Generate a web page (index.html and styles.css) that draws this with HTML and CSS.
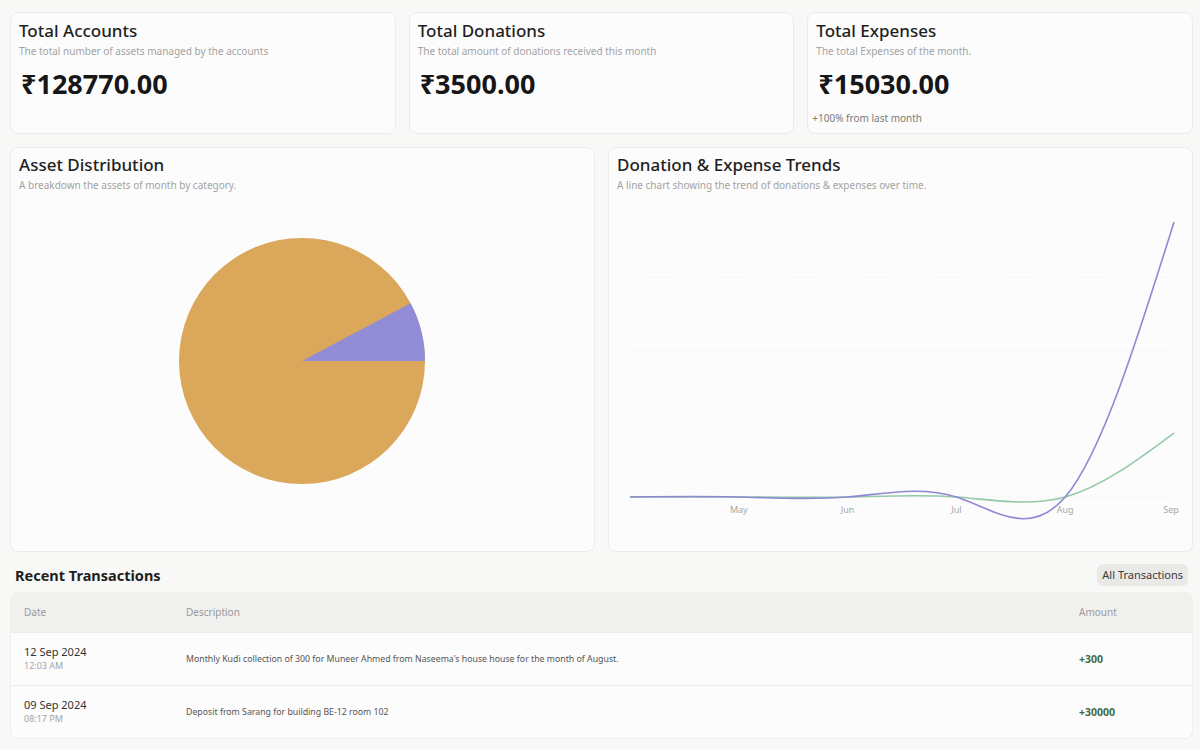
FILE: index.html
```html
<!DOCTYPE html>
<html lang="en">
<head>
<meta charset="utf-8">
<title>Dashboard</title>
<link rel="stylesheet" href="styles.css">
</head>
<body>
<main class="page">
  <section class="stats">
    <div class="card stat">
      <h2 class="card-title">Total Accounts</h2>
      <p class="card-sub">The total number of assets managed by the accounts</p>
      <div class="stat-value">₹128770.00</div>
    </div>
    <div class="card stat">
      <h2 class="card-title">Total Donations</h2>
      <p class="card-sub">The total amount of donations received this month</p>
      <div class="stat-value">₹3500.00</div>
    </div>
    <div class="card stat">
      <h2 class="card-title">Total Expenses</h2>
      <p class="card-sub">The total Expenses of the month.</p>
      <div class="stat-value">₹15030.00</div>
      <div class="stat-foot">+100% from last month</div>
    </div>
  </section>

  <section class="charts">
    <div class="card chart-card">
      <h2 class="card-title">Asset Distribution</h2>
      <p class="card-sub">A breakdown the assets of month by category.</p>
      <div class="chart">
        <svg class="chart-svg" viewBox="11 196 583 347" width="583" height="347">
          <circle cx="302" cy="361" r="123" fill="#dba75b"/>
          <path d="M302 361 L425 361 A123 123 0 0 0 410.6 303.3 Z" fill="#928bd6"/>
        </svg>
      </div>
    </div>
    <div class="card chart-card">
      <h2 class="card-title">Donation &amp; Expense Trends</h2>
      <p class="card-sub">A line chart showing the trend of donations &amp; expenses over time.</p>
      <div class="chart">
        <svg class="chart-svg" viewBox="609 196 583 347" width="583" height="347">
          <g class="grid">
            <line x1="630" y1="277" x2="1174" y2="277"/>
            <line x1="630" y1="351" x2="1174" y2="351"/>
            <line x1="630" y1="424" x2="1174" y2="424"/>
            <line x1="630" y1="497" x2="1174" y2="497"/>
          </g>
          <g class="axis">
            <text x="738.8" y="513">May</text>
            <text x="847.6" y="513">Jun</text>
            <text x="956.4" y="513">Jul</text>
            <text x="1065.2" y="513">Aug</text>
            <text x="1171" y="513">Sep</text>
          </g>
          <path class="line-green" d="M630 497 C666.27 496.90 702.53 496.80 738.8 497 C775.07 497.20 811.33 497.71 847.6 497 C883.87 496.29 920.13 494.35 956.4 497 C992.67 499.65 1028.93 506.90 1065.2 497 C1101.47 487.10 1137.73 460.05 1174 433"/>
          <path class="line-purple" d="M630 497 C666.27 496.56 702.53 496.12 738.8 497 C775.07 497.88 811.33 500.07 847.6 497 C883.87 493.93 920.13 485.60 956.4 497 C992.67 508.40 1028.93 539.54 1065.2 497 C1101.47 454.46 1137.73 338.23 1174 222"/>
        </svg>
      </div>
    </div>
  </section>

  <section class="tx">
    <div class="tx-head">
      <h2 class="tx-title">Recent Transactions</h2>
      <button class="btn">All Transactions</button>
    </div>
    <div class="table-wrap">
      <table class="table">
        <thead>
          <tr>
            <th class="col-date">Date</th>
            <th class="col-desc">Description</th>
            <th class="col-amt">Amount</th>
          </tr>
        </thead>
        <tbody>
          <tr>
            <td class="col-date"><div class="d">12 Sep 2024</div><div class="t">12:03 AM</div></td>
            <td class="col-desc">Monthly Kudi collection of 300 for Muneer Ahmed from Naseema's house house for the month of August.</td>
            <td class="col-amt amt">+300</td>
          </tr>
          <tr>
            <td class="col-date"><div class="d">09 Sep 2024</div><div class="t">08:17 PM</div></td>
            <td class="col-desc">Deposit from Sarang for building BE-12 room 102</td>
            <td class="col-amt amt">+30000</td>
          </tr>
        </tbody>
      </table>
    </div>
  </section>
</main>
</body>
</html>
```

FILE: styles.css
```css
* { box-sizing: border-box; }
html, body {
  margin: 0;
  padding: 0;
  background: #f8f8f7;
  font-family: "Noto Sans", "Open Sans", sans-serif;
  color: #1c1c1c;
  overflow: hidden;
}
.page {
  padding: 12px 7px 0 10px;
}
.stats {
  display: grid;
  grid-template-columns: repeat(3, 1fr);
  gap: 13px;
}
.card {
  background: #fcfcfc;
  border: 1px solid #ebebea;
  border-radius: 8px;
  padding: 7px 8px 8px;
}
.card-title {
  margin: 0;
  font-size: 17px;
  line-height: 22px;
  font-weight: 500;
  color: #1f1f1f;
}
.card-sub {
  margin: 2px 0 0;
  font-size: 10px;
  line-height: 14px;
  color: #a3a3a3;
}
.stat-value {
  margin-top: 10px;
  font-size: 27px;
  line-height: 32px;
  font-weight: 700;
  color: #161616;
  padding-left: 2px;
}
.stat-foot {
  margin-top: 11px;
  margin-left: -4px;
  font-size: 10px;
  line-height: 14px;
  color: #7a7a7a;
}
.charts {
  margin-top: 13px;
  display: grid;
  grid-template-columns: repeat(2, 1fr);
  gap: 13px;
}
.chart-card {
  padding-top: 6px;
  padding-bottom: 8px;
}
.chart {
  margin: 4px -8px 0;
  height: 347px;
}
.chart-svg {
  display: block;
  width: 583px;
  height: 347px;
}
.grid line {
  stroke: #f4f4f3;
  stroke-width: 1;
  stroke-dasharray: 6 3;
}
.axis text {
  font-size: 9px;
  fill: #a8a8a8;
  text-anchor: middle;
}
.line-green, .line-purple {
  fill: none;
  stroke-width: 1.6;
}
.line-green { stroke: #93c9a8; }
.line-purple { stroke: #8f88d2; }
.tx {
  margin-top: 12px;
}
.tx-head {
  display: flex;
  justify-content: space-between;
  align-items: center;
  padding: 0 5px 0 5px;
  height: 22px;
}
.tx-title {
  margin: 0;
  font-size: 14.5px;
  font-weight: 700;
  color: #1e1e1e;
}
.btn {
  font-family: inherit;
  font-size: 11px;
  line-height: 14px;
  color: #3a3a3a;
  background: #e9e9e8;
  border: none;
  border-radius: 6px;
  padding: 4px 5px;
}
.table-wrap {
  margin-top: 6px;
  border: 1px solid #eeeeed;
  border-radius: 8px;
  overflow: hidden;
  background: #fcfcfc;
}
.table {
  width: 100%;
  border-collapse: collapse;
}
.table th {
  background: #f0f0ee;
  height: 39px;
  font-size: 10px;
  font-weight: 400;
  color: #9a9a9a;
  text-align: left;
  padding: 0 13px;
}
.table td {
  height: 53px;
  border-top: 1px solid #ececeb;
  padding: 0 13px;
  font-size: 8.75px;
  color: #555;
  vertical-align: middle;
}
.col-date { width: 162px; }
.col-amt { width: 129px; }
.table .col-amt { padding-left: 16px; }
.d {
  font-size: 11px;
  line-height: 14px;
  color: #333;
}
.t {
  font-size: 9px;
  line-height: 13px;
  color: #a5a5a5;
}
.table .amt {
  font-size: 10.5px;
  font-weight: 700;
  color: #3e6a46;
}
```
